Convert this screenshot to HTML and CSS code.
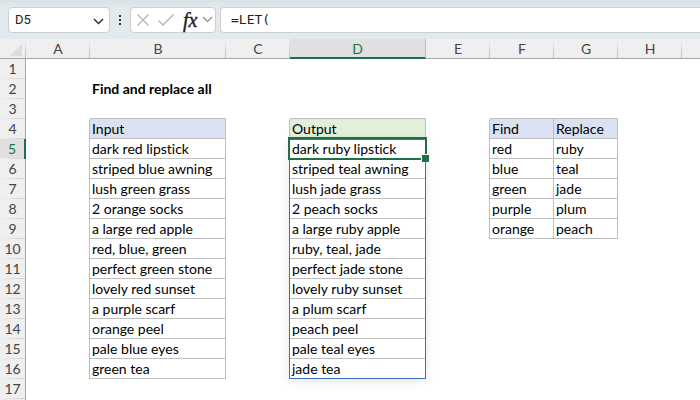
FILE: index.html
```html
<!DOCTYPE html>
<html lang="en">
<head>
<meta charset="utf-8">
<title>Find and replace all</title>
<link rel="stylesheet" href="styles.css">
</head>
<body>
<header class="bar">
  <div class="box namebox">
    <select class="name" aria-label="Name box"><option>D5</option></select>
    <svg class="chevron" width="11" height="7" viewBox="0 0 11 7"><path d="M1 1l4.500 4.500L10 1"/></svg>
  </div>
  <svg class="dots" width="4" height="12" viewBox="0 0 4 12"><path d="M1 1h2v2H1zM1 5h2v2H1zM1 9h2v2H1z"/></svg>
  <div class="box tools">
    <button class="tool" aria-label="Cancel"><svg width="12" height="12" viewBox="0 0 12 12"><path d="M.5.5l11 11M11.500.5l-11 11"/></svg></button>
    <button class="tool" aria-label="Enter"><svg width="16" height="12" viewBox="0 0 16 12"><path d="M.5 6.500l4.500 4.500L15.500.5"/></svg></button>
    <button class="tool fx" aria-label="Insert function">fx</button>
    <button class="tool more" aria-label="More functions"><svg width="11" height="7" viewBox="0 0 11 7"><path d="M1 1l4.500 4.500L10 1"/></svg></button>
  </div>
  <input class="box formula" aria-label="Formula bar" value="=LET(">
</header>
<main>
<table class="sheet">
  <colgroup><col class="rows"><col class="narrow"><col class="wide"><col class="narrow"><col class="wide"><col class="narrow"><col class="narrow"><col class="narrow"><col class="narrow"><col></colgroup>
  <thead>
    <tr><th class="corner"><svg width="12" height="12" viewBox="0 0 12 12"><path d="M12 0v12H0z"/></svg></th><th>A</th><th>B</th><th>C</th><th class="active">D</th><th>E</th><th>F</th><th>G</th><th>H</th><th class="last"></th></tr>
  </thead>
  <tbody>
    <tr><th>1</th></tr>
    <tr><th>2</th><td></td><td class="title">Find and replace all</td></tr>
    <tr><th>3</th><td></td><td class="line"></td><td></td><td class="line"></td><td></td><td class="line"></td><td class="line"></td></tr>
    <tr><th>4</th><td class="edge"></td><td class="cell blue">Input</td><td class="edge"></td><td class="cell green">Output</td><td class="edge"></td><td class="cell blue">Find</td><td class="cell blue">Replace</td></tr>
    <tr><th class="active">5</th><td class="edge"></td><td class="cell">dark red lipstick</td><td class="edge"></td><td class="cell selected">dark ruby lipstick<span class="spill"></span><span class="cursor"></span></td><td class="edge"></td><td class="cell">red</td><td class="cell">ruby</td></tr>
    <tr><th>6</th><td class="edge"></td><td class="cell">striped blue awning</td><td class="edge"></td><td class="cell">striped teal awning</td><td class="edge"></td><td class="cell">blue</td><td class="cell">teal</td></tr>
    <tr><th>7</th><td class="edge"></td><td class="cell">lush green grass</td><td class="edge"></td><td class="cell">lush jade grass</td><td class="edge"></td><td class="cell">green</td><td class="cell">jade</td></tr>
    <tr><th>8</th><td class="edge"></td><td class="cell">2 orange socks</td><td class="edge"></td><td class="cell">2 peach socks</td><td class="edge"></td><td class="cell">purple</td><td class="cell">plum</td></tr>
    <tr><th>9</th><td class="edge"></td><td class="cell">a large red apple</td><td class="edge"></td><td class="cell">a large ruby apple</td><td class="edge"></td><td class="cell">orange</td><td class="cell">peach</td></tr>
    <tr><th>10</th><td class="edge"></td><td class="cell">red, blue, green</td><td class="edge"></td><td class="cell">ruby, teal, jade</td></tr>
    <tr><th>11</th><td class="edge"></td><td class="cell">perfect green stone</td><td class="edge"></td><td class="cell">perfect jade stone</td></tr>
    <tr><th>12</th><td class="edge"></td><td class="cell">lovely red sunset</td><td class="edge"></td><td class="cell">lovely ruby sunset</td></tr>
    <tr><th>13</th><td class="edge"></td><td class="cell">a purple scarf</td><td class="edge"></td><td class="cell">a plum scarf</td></tr>
    <tr><th>14</th><td class="edge"></td><td class="cell">orange peel</td><td class="edge"></td><td class="cell">peach peel</td></tr>
    <tr><th>15</th><td class="edge"></td><td class="cell">pale blue eyes</td><td class="edge"></td><td class="cell">pale teal eyes</td></tr>
    <tr><th>16</th><td class="edge"></td><td class="cell">green tea</td><td class="edge"></td><td class="cell">jade tea</td></tr>
    <tr><th>17</th></tr>
  </tbody>
</table>
</main>
</body>
</html>
```
FILE: styles.css
```css
* { box-sizing: border-box; }
body {
  margin: 0;
  background: linear-gradient(90deg, #efefef 25px, #a6a6a6 25px, #a6a6a6 26px, #fff 26px);
  min-height: 100vh;
  color: #000;
  font: 14px/18px Lato, "Noto Sans", sans-serif;
  font-variant-ligatures: none;
  overflow-x: hidden;
}
.bar {
  display: flex;
  align-items: center;
  height: 39px;
  padding-left: 8px;
  background: linear-gradient(#d9e2e5, #e3eaed 8px);
}
.box {
  height: 26px;
  background: #fff;
  border: 1px solid #cfcfcf;
  border-radius: 4px;
}
.namebox { position: relative; width: 102px; }
.name {
  appearance: none;
  width: 100%;
  height: 100%;
  padding: 0 24px 0 6px;
  border: 0;
  background: none;
  color: #222;
  font: 13px/20px Roboto, "Noto Sans", sans-serif;
}
.chevron {
  position: absolute;
  right: 5px;
  top: 10px;
  fill: none;
  stroke: #333;
  stroke-width: 1.5;
  pointer-events: none;
}
.dots { margin: 0 8px; fill: #333; }
.tools {
  display: flex;
  align-items: center;
  gap: 9px;
  width: 86px;
  padding-left: 6px;
}
.tool {
  display: flex;
  flex: none;
  padding: 0;
  border: 0;
  background: none;
}
.tool svg { fill: none; stroke: #b5b5b5; stroke-width: 1.3; }
.tool.more { margin-left: -5px; }
.tool.more svg { stroke: #999; stroke-width: 1.5; }
.tool.fx {
  width: 15px;
  color: #222;
  font: italic 20px/20px "Liberation Serif", serif;
  -webkit-text-stroke: 0.4px #222;
}
.formula {
  flex: 1;
  min-width: 0;
  margin-left: 4px;
  padding: 0 10px;
  border-right: 0;
  border-radius: 4px 0 0 4px;
  color: #222;
  font: 13px/20px "DejaVu Sans Mono", monospace;
}
.sheet {
  width: 100%;
  table-layout: fixed;
  border-collapse: separate;
  border-spacing: 0;
}
.rows { width: 26px; }
.narrow { width: 64px; }
.wide { width: 136px; }
th, td { height: 20px; padding: 0; white-space: nowrap; }
th {
  background: #efefef;
  color: #444;
  font-weight: 400;
  text-align: center;
}
thead th {
  padding-top: 1px;
  border-bottom: 1px solid #a6a6a6;
  background:
    linear-gradient(#efefef, #bdbdbd) right / 1px 100% no-repeat #efefef;
}
thead th.last { background: #efefef; }
thead th.active {
  padding-top: 2px;
  background: #e0e0e0;
  border-right: 1px solid #bdbdbd;
  border-bottom: 2px solid #1e7145;
  line-height: 16px;
  color: #1e7145;
}
.corner svg { display: block; margin: 2px 4px 0 auto; fill: #dcdcdc; }
tbody th {
  border-right: 1px solid #a6a6a6;
  background: linear-gradient(90deg, #efefef, #cfcfcf) bottom / 100% 1px no-repeat #efefef;
}
tbody th.active {
  background-color: #e0e0e0;
  border-right: 2px solid #1e7145;
  color: #1e7145;
}
td { text-align: left; }
.title { padding-left: 2px; font-weight: 700; }
.line { border-bottom: 1px solid #bfbfbf; }
.edge { border-right: 1px solid #bfbfbf; }
.cell {
  padding-left: 2px;
  border-right: 1px solid #bfbfbf;
  border-bottom: 1px solid #bfbfbf;
}
.blue { background: #d9e1f2; }
.green { background: #e2efda; }
.selected { position: relative; }
.spill {
  position: absolute;
  left: -1px;
  right: -1px;
  top: 0;
  height: 240px;
  border: 1px solid #3a6fc4;
  box-shadow: 0 2px 10px rgba(0, 0, 0, .1);
}
.cursor {
  position: absolute;
  inset: -2px;
  border: 2px solid #1e7145;
}
.cursor::after {
  content: "";
  position: absolute;
  right: -4px;
  bottom: -4px;
  width: 7px;
  height: 7px;
  border: solid #fff;
  border-width: 1px 0 0 1px;
  background: #1e7145;
}
```
